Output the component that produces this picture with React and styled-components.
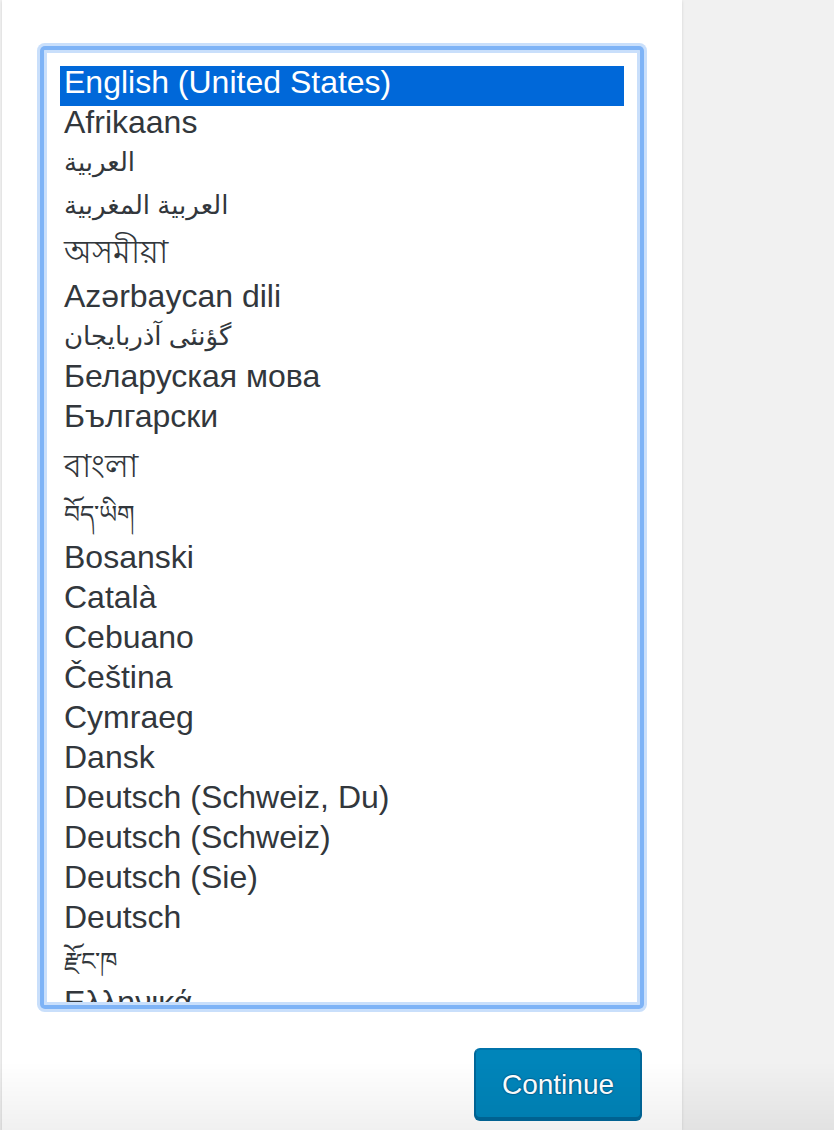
import styled, { createGlobalStyle } from "styled-components";

const GlobalStyle = createGlobalStyle`
  html, body {
    margin: 0;
    padding: 0;
    background: #f1f1f1;
  }
  body {
    font-family: "Liberation Sans", Arial, "DejaVu Sans", "Noto Sans", sans-serif;
    color: #32373c;
  }
`;

// heights and offsets follow the rendered rows of the native listbox
const languages = [
  { label: "English (United States)", h: 40, selected: true },
  { label: "Afrikaans", h: 40 },
  { label: "العربية", h: 42, pt: 0, size: 26 },
  { label: "العربية المغربية", h: 42, pt: 1, size: 26 },
  { label: "অসমীয়া", h: 50, pt: 6 },
  { label: "Azərbaycan dili", h: 40 },
  { label: "گؤنئی آذربایجان", h: 40, pt: 0, size: 26 },
  { label: "Беларуская мова", h: 40 },
  { label: "Български", h: 40 },
  { label: "বাংলা", h: 50, pt: 10 },
  { label: "བོད་ཡིག", h: 51, pt: 8, size: 25 },
  { label: "Bosanski", h: 40 },
  { label: "Català", h: 40 },
  { label: "Cebuano", h: 40 },
  { label: "Čeština", h: 40 },
  { label: "Cymraeg", h: 40 },
  { label: "Dansk", h: 40 },
  { label: "Deutsch (Schweiz, Du)", h: 40 },
  { label: "Deutsch (Schweiz)", h: 40 },
  { label: "Deutsch (Sie)", h: 40 },
  { label: "Deutsch", h: 40 },
  { label: "རྫོང་ཁ", h: 45, pt: 4, size: 25 },
  { label: "Ελληνικά", h: 40 },
];

function App() {
  return (
    <>
      <GlobalStyle />
      <Panel>
        <Listbox role="listbox" aria-label="Select a default language">
          <OptionList>
            {languages.map((lang) => (
              <Option
                key={lang.label}
                role="option"
                aria-selected={!!lang.selected}
                $h={lang.h}
                $pt={lang.pt || 0}
                $size={lang.size || 32}
                $selected={lang.selected}
              >
                {lang.label}
              </Option>
            ))}
          </OptionList>
        </Listbox>
        <Step>
          <ContinueButton type="button">Continue</ContinueButton>
        </Step>
      </Panel>
      <BottomFade />
    </>
  );
}

export default App;

const Panel = styled.div`
  box-sizing: border-box;
  width: 680px;
  min-height: 100vh;
  margin-left: 2px;
  padding: 48px 40px 0;
  background: #fff;
  box-shadow: 0 1px 3px rgba(0, 0, 0, 0.13);
`;

const Listbox = styled.div`
  box-sizing: border-box;
  width: 600px;
  height: 959px;
  padding: 3px;
  background: #fff;
  border: 2px solid #7eb3f6;
  border-radius: 3px;
  box-shadow: inset 0 0 0 3px #c9dffb, 0 0 0 2px #7eb3f6, 0 0 0 5px #c9dffb;
`;

const OptionList = styled.div`
  box-sizing: border-box;
  height: 100%;
  padding: 13px;
  overflow: hidden;
`;

const Option = styled.div`
  box-sizing: border-box;
  height: ${(p) => p.$h}px;
  padding: ${(p) => p.$pt}px 4px 0;
  font-size: ${(p) => p.$size}px;
  line-height: 32px;
  white-space: nowrap;
  color: ${(p) => (p.$selected ? "#fff" : "#32373c")};
  background: ${(p) => (p.$selected ? "#0068d9" : "transparent")};
`;

const Step = styled.div`
  display: flex;
  justify-content: flex-end;
  padding-top: 41px;
`;

const ContinueButton = styled.button`
  box-sizing: border-box;
  width: 168px;
  height: 71px;
  padding: 2px 0 0;
  font-family: "Liberation Sans", Arial, sans-serif;
  font-size: 28px;
  color: #fff;
  background: #0085ba;
  border: 2px solid #006799;
  border-top-color: #0073aa;
  border-radius: 6px;
  box-shadow: 0 2px 0 #006799;
  text-shadow: 0 -1px 1px #006799, 1px 0 1px #006799, 0 1px 1px #006799,
    -1px 0 1px #006799;
  cursor: pointer;
`;

const BottomFade = styled.div`
  position: fixed;
  left: 0;
  right: 0;
  bottom: 0;
  height: 68px;
  pointer-events: none;
  background: linear-gradient(rgba(0, 0, 0, 0), rgba(0, 0, 0, 0.06));
`;
